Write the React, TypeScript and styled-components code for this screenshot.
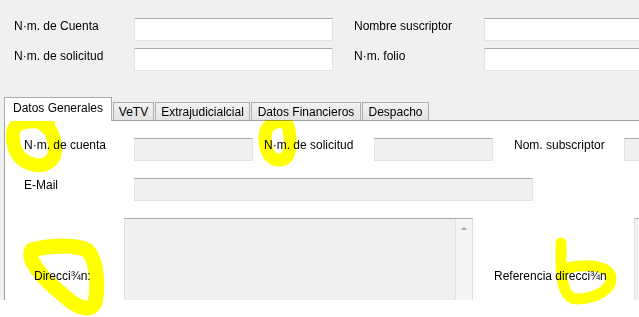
import styled, { createGlobalStyle } from "styled-components";

const GlobalStyle = createGlobalStyle`
  html, body {
    margin: 0;
    padding: 0;
    background: #ffffff;
  }
  body {
    font-family: "Liberation Sans", Arial, sans-serif;
    font-size: 12px;
    color: #000;
  }
`;

const Page = styled.div`
  position: relative;
  width: 639px;
  height: 317px;
  overflow: hidden;
  background: #ffffff;
`;

const Window = styled.div`
  height: 300px;
  background: #f0f0f0;
  overflow: hidden;
  display: flex;
  flex-direction: column;
`;

const SearchGrid = styled.div`
  display: grid;
  grid-template-columns: 120px 220px 130px 200px;
  row-gap: 7px;
  padding: 18px 0 0 14px;
`;

const Label = styled.div<{ $w?: number; $ml?: number; $mt?: number }>`
  flex: none;
  width: ${(p) => (p.$w ? `${p.$w}px` : "auto")};
  margin-left: ${(p) => p.$ml ?? 0}px;
  margin-top: ${(p) => p.$mt ?? 0}px;
  line-height: 14px;
  white-space: nowrap;
`;

const Field = styled.div<{ $w: number; $disabled?: boolean }>`
  flex: none;
  box-sizing: border-box;
  width: ${(p) => p.$w}px;
  height: 23px;
  background: ${(p) => (p.$disabled ? "#f0f0f0" : "#ffffff")};
  border: 1px solid #e2e3e4;
  border-top-color: #a9abad;
`;

const TabStrip = styled.div`
  display: flex;
  align-items: flex-end;
  gap: 1px;
  height: 23px;
  margin: 26px 0 0 4px;
`;

const Tab = styled.div<{ $w: number; $active?: boolean }>`
  position: relative;
  z-index: ${(p) => (p.$active ? 2 : 1)};
  box-sizing: border-box;
  width: ${(p) => p.$w}px;
  height: ${(p) => (p.$active ? 24 : 18)}px;
  margin-bottom: ${(p) => (p.$active ? -1 : 0)}px;
  border: 1px solid #acacac;
  border-bottom: none;
  background: ${(p) =>
    p.$active ? "#ffffff" : "linear-gradient(#f2f2f2, #e3e3e3)"};
  display: flex;
  align-items: center;
  justify-content: center;
  padding-bottom: ${(p) => (p.$active ? 3 : 0)}px;
  white-space: nowrap;
`;

const Panel = styled.div`
  flex: 1;
  margin-left: 4px;
  background: #ffffff;
  border-left: 1px solid #a0a0a0;
  border-top: 1px solid #a0a0a0;
  padding: 17px 0 0 19px;
  display: flex;
  flex-direction: column;
  gap: 17px;
`;

const Row = styled.div<{ $h?: number }>`
  display: flex;
  align-items: flex-start;
  height: ${(p) => p.$h ?? 23}px;
`;

const TextArea = styled.div<{ $w: number }>`
  flex: none;
  box-sizing: border-box;
  width: ${(p) => p.$w}px;
  height: 110px;
  background: #f0f0f0;
  border: 1px solid #dedede;
  border-top-color: #a9abad;
  display: flex;
  justify-content: flex-end;
`;

const ScrollBar = styled.div`
  width: 16px;
  background: #f4f4f4;
  border-left: 1px solid #e4e4e4;
  display: flex;
  justify-content: center;
  padding-top: 8px;
`;

const UpArrow = styled.div`
  width: 0;
  height: 0;
  border-left: 3px solid transparent;
  border-right: 3px solid transparent;
  border-bottom: 3px solid #a3a3a3;
`;

const Marks = styled.svg`
  position: absolute;
  top: 0;
  left: 0;
  pointer-events: none;
  mix-blend-mode: multiply;
`;

const tabs = [
  { label: "Datos Generales", w: 108, active: true },
  { label: "VeTV", w: 41 },
  { label: "Extrajudicialcial", w: 95 },
  { label: "Datos Financieros", w: 110 },
  { label: "Despacho", w: 67 },
];

export default function App() {
  return (
    <Page>
      <GlobalStyle />
      <Window>
        <SearchGrid>
          <Label $mt={1}>N·m. de Cuenta</Label>
          <Field $w={199} />
          <Label $mt={1}>Nombre suscriptor</Label>
          <Field $w={200} />
          <Label $mt={1}>N·m. de solicitud</Label>
          <Field $w={199} />
          <Label $mt={1}>N·m. folio</Label>
          <Field $w={200} />
        </SearchGrid>

        <TabStrip>
          {tabs.map((t) => (
            <Tab key={t.label} $w={t.w} $active={t.active}>
              {t.label}
            </Tab>
          ))}
        </TabStrip>

        <Panel>
          <Row>
            <Label $w={110}>N·m. de cuenta</Label>
            <Field $w={119} $disabled />
            <Label $w={110} $ml={11}>N·m. de solicitud</Label>
            <Field $w={119} $disabled />
            <Label $w={110} $ml={21}>Nom. subscriptor</Label>
            <Field $w={119} $disabled />
          </Row>
          <Row>
            <Label $w={110}>E-Mail</Label>
            <Field $w={399} $disabled />
          </Row>
          <Row $h={110}>
            <Label $w={90} $ml={10} $mt={51}>Direcci¾n:</Label>
            <TextArea $w={349}>
              <ScrollBar>
                <UpArrow />
              </ScrollBar>
            </TextArea>
            <Label $w={140} $ml={21} $mt={51}>Referencia direcci¾n</Label>
            <TextArea $w={120} />
          </Row>
        </Panel>
      </Window>

      <Marks width="639" height="317" viewBox="0 0 639 317">
        <g fill="none" stroke="#ffff00" strokeLinecap="round" strokeLinejoin="round">
          <path
            strokeWidth="14"
            d="M 48 124 C 34 119, 14 120, 13 133 C 12 148, 18 160, 31 164 C 45 168, 55 161, 55 150 C 55 139, 52 130, 45 126"
          />
          <path
            strokeWidth="13"
            d="M 286 123 C 275 119, 265 125, 265 138 C 265 151, 270 160, 279 160 C 289 160, 291 150, 290 138 C 289 128, 288 124, 284 122"
          />
          <path
            strokeWidth="15"
            d="M 32 250 C 50 245, 78 244, 88 251 C 98 262, 98 290, 95 303 C 91 311, 80 309, 69 300 C 56 289, 43 279, 35 266 C 30 258, 30 253, 32 250"
          />
          <path
            strokeWidth="11"
            d="M 561 243 L 561 263 C 561 285, 566 300, 578 299 C 597 298, 611 290, 611 278 C 610 267, 592 263, 567 268"
          />
        </g>
      </Marks>
    </Page>
  );
}
